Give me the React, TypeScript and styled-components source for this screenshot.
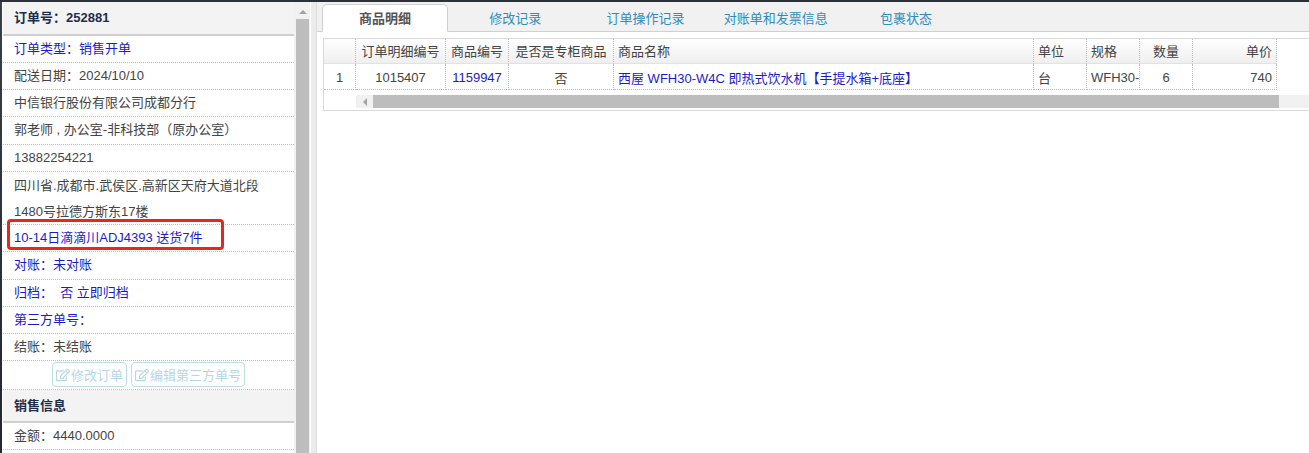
import React from 'react'
import styled, { createGlobalStyle } from 'styled-components'
import { FaRegEdit } from 'react-icons/fa'

const GlobalStyle = createGlobalStyle`
  html, body {
    margin: 0;
    padding: 0;
    height: 100%;
    overflow: hidden;
    background: #fff;
  }
  body {
    font-family: "Liberation Sans", "Noto Sans CJK SC", sans-serif;
    font-size: 13px;
    color: #444;
  }
`

const columnWidths = [32, 90, 63, 105, 420, 53, 53, 53, 84]

const tabs = ['商品明细', '修改记录', '订单操作记录', '对账单和发票信息', '包裹状态']

const App = () => {
  return (
    <>
      <GlobalStyle />
      <Page>
        <TopStrip />
        <Body>
          <LeftEdge />
          <InfoPanel>
            <SectionTitle>订单号：252881</SectionTitle>
            <InfoRow $blue>订单类型：销售开单</InfoRow>
            <InfoRow>配送日期：2024/10/10</InfoRow>
            <InfoRow>中信银行股份有限公司成都分行</InfoRow>
            <InfoRow>郭老师 , 办公室-非科技部（原办公室）</InfoRow>
            <InfoRow>13882254221</InfoRow>
            <AddressRow>
              四川省.成都市.武侯区.高新区天府大道北段
              <br />
              1480号拉德方斯东17楼
            </AddressRow>
            <InfoRow $blue>
              10-14日滴滴川ADJ4393 送货7件
              <RedMark />
            </InfoRow>
            <InfoRow $blue>对账：未对账</InfoRow>
            <InfoRow $blue>归档：&nbsp; 否 立即归档</InfoRow>
            <InfoRow $blue>第三方单号：</InfoRow>
            <InfoRow>结账：未结账</InfoRow>
            <ButtonRow>
              <GhostButton>
                <FaRegEdit />
                修改订单
              </GhostButton>
              <GhostButton>
                <FaRegEdit />
                编辑第三方单号
              </GhostButton>
            </ButtonRow>
            <SectionTitle $compact>销售信息</SectionTitle>
            <InfoRow>金额：4440.0000</InfoRow>
          </InfoPanel>
          <VerticalScroll>
            <ArrowUp />
            <VerticalThumb />
          </VerticalScroll>
          <Splitter />
          <DetailPane>
            <TabStrip>
              {tabs.map((tab, i) => (
                <Tab key={tab} $active={i === 0}>
                  {tab}
                </Tab>
              ))}
            </TabStrip>
            <GridBox>
              <Grid>
                <colgroup>
                  {columnWidths.map((width, i) => (
                    <col key={i} style={{ width }} />
                  ))}
                </colgroup>
                <thead>
                  <tr>
                    <HeadCell />
                    <HeadCell $align="center">订单明细编号</HeadCell>
                    <HeadCell $align="center">商品编号</HeadCell>
                    <HeadCell $align="center">是否是专柜商品</HeadCell>
                    <HeadCell>商品名称</HeadCell>
                    <HeadCell>单位</HeadCell>
                    <HeadCell>规格</HeadCell>
                    <HeadCell $align="center">数量</HeadCell>
                    <HeadCell $align="right">单价</HeadCell>
                  </tr>
                </thead>
                <tbody>
                  <tr>
                    <Cell $align="center">1</Cell>
                    <Cell $align="center">1015407</Cell>
                    <Cell $align="center" $blue>
                      1159947
                    </Cell>
                    <Cell $align="center">否</Cell>
                    <Cell $blue>西屋 WFH30-W4C 即热式饮水机【手提水箱+底座】</Cell>
                    <Cell>台</Cell>
                    <Cell>WFH30-</Cell>
                    <Cell $align="center">6</Cell>
                    <Cell $align="right">740</Cell>
                  </tr>
                </tbody>
              </Grid>
              <GridScroll>
                <ScrollCorner />
                <ScrollButton>
                  <ArrowLeft />
                </ScrollButton>
                <HorizontalThumb />
                <ScrollRest />
              </GridScroll>
            </GridBox>
          </DetailPane>
        </Body>
      </Page>
    </>
  )
}

const Page = styled.div`
  display: flex;
  flex-direction: column;
  width: 1309px;
  height: 453px;
  overflow: hidden;
`

const TopStrip = styled.div`
  flex: none;
  height: 2px;
  background: #2c3038;
`

const Body = styled.div`
  flex: 1;
  display: flex;
  min-height: 0;
`

const LeftEdge = styled.div`
  flex: none;
  width: 2px;
  background: linear-gradient(#3a3f48, #23262c);
`

const InfoPanel = styled.div`
  flex: none;
  width: 291px;
  margin-left: 1px;
  overflow: hidden;
`

const SectionTitle = styled.div<{ $compact?: boolean }>`
  box-sizing: border-box;
  height: ${(p) => (p.$compact ? '32.5px' : '33.5px')};
  padding-left: 11px;
  line-height: 31px;
  font-weight: bold;
  color: #1f2d4d;
  background: #f3f3f3;
  border-bottom: 2px solid #cfcfcf;
`

const InfoRow = styled.div<{ $blue?: boolean }>`
  position: relative;
  box-sizing: border-box;
  height: 27.3px;
  padding-left: 11px;
  line-height: 26px;
  white-space: nowrap;
  color: ${(p) => (p.$blue ? '#1c1cc4' : '#444')};
  border-bottom: 1px dotted #bbb;
`

const AddressRow = styled(InfoRow)`
  height: 53px;
  padding-top: 1px;
  line-height: 26.5px;
`

const RedMark = styled.span`
  position: absolute;
  left: 4px;
  top: -6px;
  width: 217px;
  height: 31px;
  box-sizing: border-box;
  border: 3px solid #e5281f;
  border-radius: 4px;
`

const ButtonRow = styled.div`
  box-sizing: border-box;
  height: 29px;
  display: flex;
  justify-content: center;
  gap: 4px;
  padding-top: 1px;
  border-bottom: 1px dotted #bbb;
`

const GhostButton = styled.button`
  box-sizing: border-box;
  height: 25px;
  padding: 0 3px;
  display: flex;
  align-items: center;
  gap: 1px;
  font: inherit;
  color: #b5d8e4;
  background: #fff;
  border: 1px solid #bcdce6;
  border-radius: 4px;

  svg {
    width: 14px;
    height: 14px;
  }
`

const VerticalScroll = styled.div`
  flex: none;
  width: 16px;
  padding-left: 2px;
  box-sizing: border-box;
  background: #f1f1f1;
  display: flex;
  flex-direction: column;
`

const ArrowUp = styled.div`
  flex: none;
  width: 0;
  height: 0;
  margin: 8px 0 5px 3px;
  border-left: 4px solid transparent;
  border-right: 4px solid transparent;
  border-bottom: 4px solid #a3a3a3;
`

const VerticalThumb = styled.div`
  flex: 1;
  width: 13px;
  background: #bdbdbd;
`

const Splitter = styled.div`
  flex: none;
  width: 7px;
  background: #ececec;
  border-left: 1px solid #fff;
  border-right: 1px solid #ddd;
  box-sizing: border-box;
`

const DetailPane = styled.div`
  flex: 1;
  min-width: 0;
  display: flex;
  flex-direction: column;
`

const TabStrip = styled.div`
  flex: none;
  box-sizing: border-box;
  height: 30px;
  display: flex;
  align-items: flex-end;
  padding-left: 5px;
  background: #f1f1f1;
  border-bottom: 1px solid #d0d0d0;
`

const Tab = styled.div<{ $active?: boolean }>`
  flex: none;
  box-sizing: border-box;
  width: 126px;
  height: 28px;
  margin-right: 4.25px;
  margin-bottom: -1px;
  line-height: 27px;
  text-align: center;
  color: ${(p) => (p.$active ? '#555' : '#2f8dbd')};
  font-weight: ${(p) => (p.$active ? 'bold' : 'normal')};
  background: ${(p) => (p.$active ? '#fff' : 'transparent')};
  border: 1px solid ${(p) => (p.$active ? '#d0d0d0' : 'transparent')};
  border-bottom: 1px solid ${(p) => (p.$active ? '#fff' : '#d0d0d0')};
  border-radius: 5px 5px 0 0;
`

const GridBox = styled.div`
  margin: 6px 0 0 6px;
  border-top: 1px solid #d9d9d9;
  border-left: 1px solid #d9d9d9;
  border-bottom: 1px solid #d9d9d9;
`

const Grid = styled.table`
  table-layout: fixed;
  width: 953px;
  border-collapse: separate;
  border-spacing: 0;
`

const cellAlign = (p: { $align?: string }) => p.$align ?? 'left'

const HeadCell = styled.th<{ $align?: string }>`
  box-sizing: border-box;
  height: 25px;
  padding: 0 4px 1px;
  overflow: hidden;
  white-space: nowrap;
  font-weight: normal;
  text-align: ${cellAlign};
  color: #444;
  background: linear-gradient(#fff, #efefef);
  border-right: 1px dotted #bbb;
  border-bottom: 1px solid #e2e2e2;
`

const Cell = styled.td<{ $align?: string; $blue?: boolean }>`
  box-sizing: border-box;
  height: 26px;
  padding: 1px 4px 0;
  overflow: hidden;
  white-space: nowrap;
  text-align: ${cellAlign};
  color: ${(p) => (p.$blue ? '#1c1cc4' : '#444')};
  border-right: 1px dotted #bbb;
  border-bottom: 1px dotted #bbb;
`

const GridScroll = styled.div`
  display: flex;
  height: 20px;
  padding: 5px 0 2px;
  box-sizing: border-box;
`

const ScrollCorner = styled.div`
  flex: none;
  width: 32px;
`

const ScrollButton = styled.div`
  flex: none;
  width: 17px;
  display: flex;
  align-items: center;
  justify-content: center;
  background: #f1f1f1;
`

const ArrowLeft = styled.div`
  width: 0;
  height: 0;
  border-top: 4px solid transparent;
  border-bottom: 4px solid transparent;
  border-right: 4px solid #a3a3a3;
`

const HorizontalThumb = styled.div`
  flex: none;
  width: 906px;
  background: #bdbdbd;
`

const ScrollRest = styled.div`
  flex: 1;
  background: #f1f1f1;
`

export default App
